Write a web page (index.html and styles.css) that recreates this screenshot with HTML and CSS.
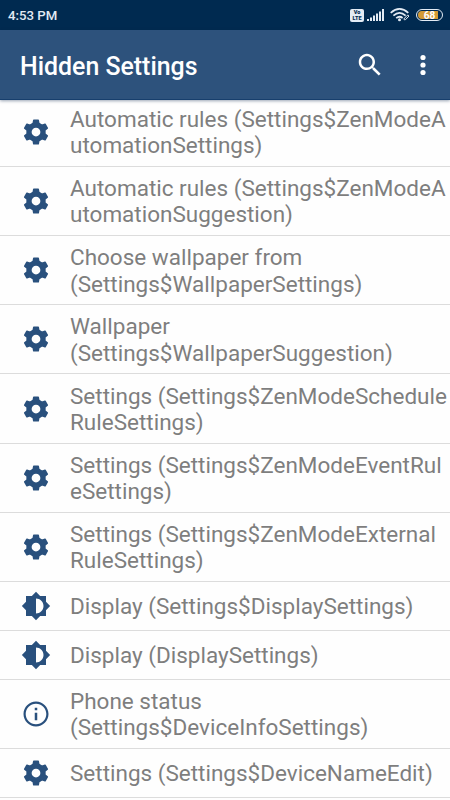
FILE: index.html
```html
<!DOCTYPE html>
<html lang="en">
<head>
<meta charset="utf-8">
<title>Hidden Settings</title>
<link rel="stylesheet" href="styles.css">
</head>
<body>
<svg class="defs" width="0" height="0">
  <symbol id="gear" viewBox="0 0 24 24">
    <circle class="ring" cx="12" cy="12" r="5.650"/>
    <path id="tooth" d="M10.200 2h3.600q.5 0 .6.5l.5 2.900.9 1.400H8.200l.9-1.400.5-2.900q.1-.5.6-.5z"/>
    <use href="#tooth" transform="rotate(60 12 12)"/>
    <use href="#tooth" transform="rotate(120 12 12)"/>
    <use href="#tooth" transform="rotate(180 12 12)"/>
    <use href="#tooth" transform="rotate(240 12 12)"/>
    <use href="#tooth" transform="rotate(300 12 12)"/>
  </symbol>
  <symbol id="bright" viewBox="0 0 24 24"><path d="M20 15.31L23.31 12 20 8.69V4h-4.69L12 .69 8.69 4H4v4.69L.69 12 4 15.31V20h4.69L12 23.31 15.31 20H20v-4.69zM12 18V6c3.31 0 6 2.69 6 6s-2.69 6-6 6z"/></symbol>
  <symbol id="info" viewBox="0 0 24 24"><path d="M11 17h2v-6h-2v6zm1-15C6.48 2 2 6.48 2 12s4.48 10 10 10 10-4.48 10-10S17.52 2 12 2zm0 18.250c-4.550 0-8.250-3.700-8.250-8.250s3.700-8.250 8.250-8.250 8.250 3.700 8.250 8.250-3.700 8.250-8.250 8.250zM11 9h2V7h-2v2z"/></symbol>
</svg>
<div class="screen">
  <div class="status">
    <span class="time">4:53 PM</span>
    <div class="volte"><span>Vo</span><span>LTE</span></div>
    <svg class="signal" width="17" height="12" viewBox="0 0 17 12"><path d="M0 12v-2h2v2zM3 12V8.500h2V12zM6 12V6.500h2V12zM9 12V4.500h2V12zM12 12V2.500h2V12zM15 12V0h2v12z"/></svg>
    <svg class="wifi" width="20" height="14" viewBox="0 0 20 14"><g fill="none" stroke="#e3ebf4" stroke-width="1.700"><path d="M.7 4.800Q9.500-3 18.300 4.800M3.400 7.600Q9.500 2 15.600 7.600M6.200 10.200Q9.500 7.400 12.600 10"/><path d="M13.800 11l3.400-3.600q1.200-.6 1.800.6l-3.400 3.600q-1.300.8-1.800-.6z" stroke-width="1"/></g><circle cx="9.500" cy="11.700" r="1.500" fill="#e3ebf4"/></svg>
    <div class="battery">68</div>
  </div>
  <header class="bar">
    <h1>Hidden Settings</h1>
    <svg class="search" width="30" height="30" viewBox="0 0 24 24"><path d="M15.500 14h-.79l-.28-.27C15.410 12.590 16 11.110 16 9.500 16 5.910 13.090 3 9.500 3S3 5.910 3 9.500 5.910 16 9.500 16c1.610 0 3.090-.59 4.230-1.570l.27.28v.79l5 4.990L20.490 19l-4.990-5zm-6 0C7.010 14 5 11.990 5 9.500S7.010 5 9.500 5 14 7.010 14 9.500 11.990 14 9.500 14z"/></svg>
    <svg class="more" width="8" height="22" viewBox="0 0 8 22"><circle cx="4" cy="3.500" r="2.600"/><circle cx="4" cy="11" r="2.600"/><circle cx="4" cy="18.500" r="2.600"/></svg>
  </header>
  <ul class="list">
    <li class="row"><svg class="icon"><use href="#gear"/></svg><p>Automatic rules (Settings$ZenModeA<br>utomationSettings)</p></li>
    <li class="row"><svg class="icon"><use href="#gear"/></svg><p>Automatic rules (Settings$ZenModeA<br>utomationSuggestion)</p></li>
    <li class="row"><svg class="icon"><use href="#gear"/></svg><p>Choose wallpaper from<br>(Settings$WallpaperSettings)</p></li>
    <li class="row"><svg class="icon"><use href="#gear"/></svg><p>Wallpaper<br>(Settings$WallpaperSuggestion)</p></li>
    <li class="row"><svg class="icon"><use href="#gear"/></svg><p>Settings (Settings$ZenModeSchedule<br>RuleSettings)</p></li>
    <li class="row"><svg class="icon"><use href="#gear"/></svg><p>Settings (Settings$ZenModeEventRul<br>eSettings)</p></li>
    <li class="row"><svg class="icon"><use href="#gear"/></svg><p>Settings (Settings$ZenModeExternal<br>RuleSettings)</p></li>
    <li class="row single"><svg class="icon"><use href="#bright"/></svg><p>Display (Settings$DisplaySettings)</p></li>
    <li class="row single"><svg class="icon"><use href="#bright"/></svg><p>Display (DisplaySettings)</p></li>
    <li class="row"><svg class="icon"><use href="#info"/></svg><p>Phone status<br>(Settings$DeviceInfoSettings)</p></li>
    <li class="row single"><svg class="icon"><use href="#gear"/></svg><p>Settings (Settings$DeviceNameEdit)</p></li>
  </ul>
</div>
</body>
</html>
```
FILE: styles.css
```css
* { box-sizing: border-box; margin: 0; padding: 0; }
body { background: #fefefe; font-family: Roboto, "Liberation Sans", sans-serif; }
.defs { display: block; height: 0; }
.screen { width: 450px; height: 800px; overflow: hidden; display: flex; flex-direction: column; }
.status { flex: none; height: 30px; background: #002a50; color: #e3ebf4; display: flex; align-items: center; padding: 0 7px 0 8px; }
.time { font-size: 13.200px; font-weight: 500; line-height: 16px; margin: 1px auto 0 0; white-space: nowrap; }
.volte { width: 14px; height: 13px; border-radius: 2px; background: #e3ebf4; color: #002a50; font-size: 5.500px; font-weight: 900; line-height: 6.500px; display: flex; flex-direction: column; align-items: center; justify-content: center; margin-right: 3px; }
.signal { fill: #e3ebf4; margin-right: 6px; }
.wifi { margin-right: 6px; }
.battery { width: 27px; height: 12px; border: 1px solid #e3ebf4; border-radius: 6px; background: linear-gradient(90deg, #d39a35 0 88%, #002a50 88%) content-box; padding: 1px; color: #fff; font-size: 10px; font-weight: 700; line-height: 9px; text-align: center; }
.bar { flex: none; height: 70px; background: #2d527c; color: #fff; display: flex; align-items: center; padding: 0 23px 0 20px; border-bottom: 1px solid #173f6d; box-shadow: 0 1px 3px rgba(0, 30, 70, .4); z-index: 1; }
h1 { font-size: 24.900px; font-weight: 500; line-height: 30px; margin: 5px auto 0 0; white-space: nowrap; }
.search, .more { fill: #fff; }
.search { margin-right: 34px; }
.list { list-style: none; margin-top: -2.300px; }
.row { display: flex; align-items: center; height: 69.200px; border-bottom: 1px solid #dcdcdc; padding-left: 21px; gap: 19px; }
.row.single { height: 48.800px; }
.icon { flex: none; width: 30px; height: 30px; fill: #29507d; }
.ring { fill: none; stroke: #29507d; stroke-width: 4.300; }
.row p { font-size: 22.500px; line-height: 26.400px; color: #7e7e7e; padding-top: 1px; white-space: nowrap; }
```
